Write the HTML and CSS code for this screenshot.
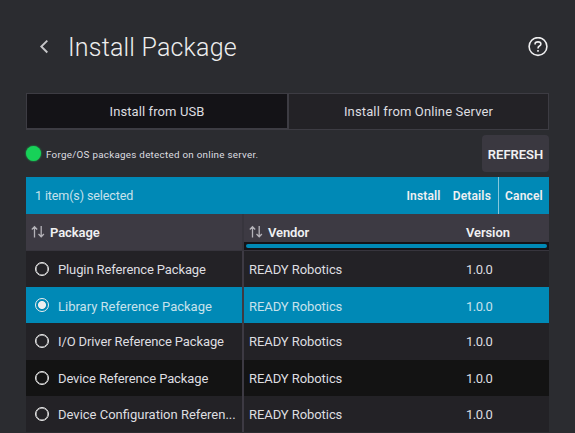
FILE: index.html
```html
<!DOCTYPE html>
<html lang="en">
<head>
<meta charset="utf-8">
<title>Install Package</title>
<link rel="stylesheet" href="styles.css">
</head>
<body>
<header class="top">
  <svg class="back" width="10" height="16" viewBox="0 0 10 16"><path d="M8.3 1.6 2.3 7.5l6 6"/></svg>
  <h1>Install Package</h1>
  <svg class="help" width="20" height="20" viewBox="0 0 20 20"><circle cx="10" cy="9.5" r="8.9"/><path d="M7.1 7.4V6.7Q7.1 4.9 10 4.9T12.9 7Q12.9 8.2 11.4 9 10 9.7 10 11.4"/><path d="M10 13v1.7"/></svg>
</header>
<nav class="tabs">
  <div class="tab active"><span class="t-usb">Install from USB</span></div>
  <div class="tab"><span class="t-online">Install from Online Server</span></div>
</nav>
<section class="status">
  <i class="dot"></i>
  <span class="message">Forge/OS packages detected on online server.</span>
  <button class="refresh">REFRESH</button>
</section>
<main class="table">
  <div class="actions">
    <span class="count">1 item(s) selected</span>
    <b class="install">Install</b>
    <b class="details">Details</b>
    <b class="cancel">Cancel</b>
  </div>
  <div class="head">
    <div class="head-left">
      <svg class="sort" width="14" height="14" viewBox="0 0 14 14"><path d="M3.5 12.5V2M.8 4.5 3.5 1.7l2.7 2.8M10.2 1v10.6M7.5 9l2.7 2.8L12.9 9"/></svg>
      <b class="h-package">Package</b>
    </div>
    <div class="head-right">
      <div class="head-cells">
        <div class="head-vendor">
          <svg class="sort" width="14" height="14" viewBox="0 0 14 14"><path d="M3.5 12.5V2M.8 4.5 3.5 1.7l2.7 2.8M10.2 1v10.6M7.5 9l2.7 2.8L12.9 9"/></svg>
          <b class="h-vendor">Vendor</b>
        </div>
        <b class="h-version">Version</b>
      </div>
      <div class="scroll"><i></i></div>
    </div>
  </div>
  <div class="row">
    <div class="package"><i class="radio"></i><span class="name tight">Plugin Reference Package</span></div>
    <div class="vendor">READY Robotics</div><div class="version">1.0.0</div>
  </div>
  <div class="row selected">
    <div class="package"><i class="radio"></i><span class="name">Library Reference Package</span></div>
    <div class="vendor">READY Robotics</div><div class="version">1.0.0</div>
  </div>
  <div class="row">
    <div class="package"><i class="radio"></i><span class="name tight">I/O Driver Reference Package</span></div>
    <div class="vendor">READY Robotics</div><div class="version">1.0.0</div>
  </div>
  <div class="row dark">
    <div class="package"><i class="radio"></i><span class="name tight">Device Reference Package</span></div>
    <div class="vendor">READY Robotics</div><div class="version">1.0.0</div>
  </div>
  <div class="row">
    <div class="package"><i class="radio"></i><span class="name">Device Configuration Referen...</span></div>
    <div class="vendor">READY Robotics</div><div class="version">1.0.0</div>
  </div>
</main>
</body>
</html>
```
FILE: styles.css
```css
* { box-sizing: border-box; }
body {
  margin: 0; width: 575px; height: 433px; overflow: hidden;
  padding: 0 26px; background: #2b2c30; color: #dedee0;
  font: 400 13px/16px Roboto, "Liberation Sans", sans-serif;
  white-space: nowrap;
}
h1 { margin: 2px auto 0 19px; font-size: 25px; line-height: 30px; font-weight: 300; color: #eee; letter-spacing: .2px; }
b { font-weight: 600; color: #f0f0f2; }
svg { fill: none; flex: none; }

.top { display: flex; align-items: center; height: 93px; padding-left: 13px; }
.back { stroke: #c6c6c8; stroke-width: 1.9; }
.help { stroke: #efeff0; stroke-width: 1.6; margin-right: 1px; }

.tabs { display: grid; grid-template-columns: 263px 260px; height: 37px; border: 1px solid #3d3c43; border-width: 1px 0; }
.tab { display: flex; align-items: center; justify-content: center; background: #232226; border-right: 1px solid #3d3c43; }
.tab.active { background: #141317; border: solid #3d3c43; border-width: 0 2px 1px 1px; }
.t-usb { padding-top: 2px; letter-spacing: .1px; }
.t-online { letter-spacing: .14px; padding-top: 1px; }

.status { display: flex; align-items: center; height: 47px; }
.dot { width: 15px; height: 15px; border-radius: 50%; background: #17d158; box-shadow: 0 0 2px #17d158; }
.message { margin: 2px auto 0 5px; font-size: 9.8px; letter-spacing: .28px; }
.refresh {
  width: 67px; height: 37px; padding: 2px 0 0; border: 0; border-radius: 4px;
  background: #3a3840; color: #f0f0f2; font: 600 13px/16px Roboto, sans-serif; letter-spacing: -.03px;
}

.actions { display: flex; align-items: center; height: 37px; background: #0089b6; font-size: 12px; }
.actions b { letter-spacing: .17px; }
.count { margin: 1px auto 0 9px; font-size: 12.5px; color: #c8e2ec; letter-spacing: -.11px; }
.install, .details { padding-top: 1px; }
.details { margin: 0 7px 0 12px; }
.cancel { border-left: 1px solid #85c7dc; width: 51px; height: 37px; line-height: 38px; padding-left: 6px; }

.head { display: grid; grid-template-columns: 218px 305px; height: 36.5px; background: #3d3a43; border-bottom: 1px solid #37353d; }
.head b { letter-spacing: -.1px; }
.head-left { display: flex; align-items: center; padding: 1px 0 0 5px; border-right: 2px solid #37353d; }
.head-cells { display: grid; grid-template-columns: 222px 83px; align-items: center; height: 28px; padding-top: 9px; }
.head-vendor { display: flex; align-items: center; padding-left: 5px; }
.sort { stroke: #b4b2b8; stroke-width: 1.3; margin: -1px 5px 0 0; }
.scroll { height: 8px; padding: 2px; background: #141317; }
.scroll i { display: block; height: 4px; border-radius: 2px; background: #0089b6; }

.row { display: grid; grid-template-columns: 218px 222px 83px; height: 36.4px; align-items: center; background: #232226; }
.package { display: flex; align-items: center; align-self: stretch; padding-left: 9px; border-right: 2px solid #3d3a43; }
.name { padding-top: 2px; }
.tight { letter-spacing: -.12px; }
.vendor { padding: 2px 0 0 5px; letter-spacing: -.07px; }
.version { padding-top: 2px; letter-spacing: -.5px; }
.selected { background: #0089b6; color: #c8e2ec; }
.selected .name, .selected .vendor, .selected .version { padding-top: 3px; }
.dark { background: #131313; }
.radio { width: 14px; height: 14px; border: 1.5px solid #eee; border-radius: 50%; margin-right: 9px; box-shadow: inset 0 0 0 .5px #eee; }
.selected .radio { background: radial-gradient(circle, #eee 3.6px, transparent 4.4px); box-shadow: none; }
```
